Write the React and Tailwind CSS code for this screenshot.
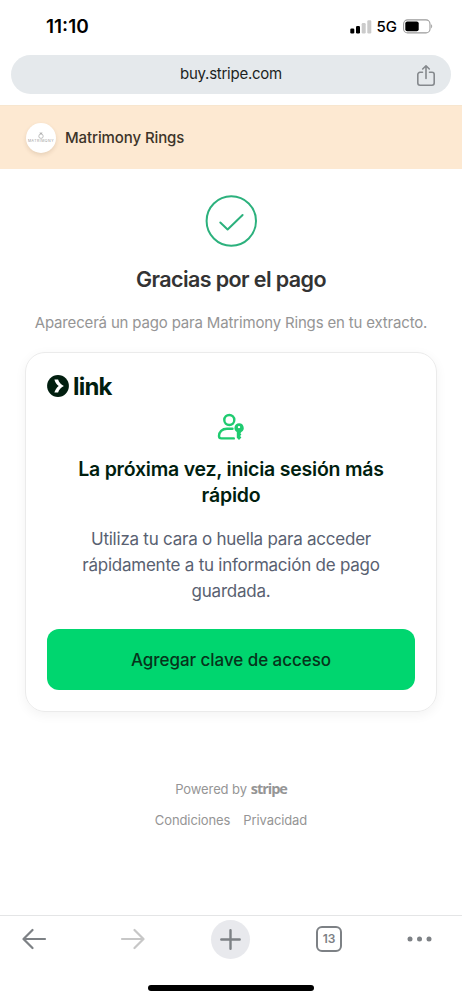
import React from 'react';

const StatusBar = () => (
  <div className="flex h-[55px] items-center justify-between pl-[46px] pr-[29px]">
    <span className="text-[19px] font-semibold text-black">11:10</span>
    <div className="mt-[-2px] flex items-center">
      <svg width="22" height="14" viewBox="0 0 22 14">
        <rect x="0.3" y="8.5" width="4" height="5" rx="1.2" fill="#000" />
        <rect x="6" y="6" width="4" height="7.5" rx="1.2" fill="#000" />
        <rect x="11.7" y="3" width="4" height="10.5" rx="1.2" fill="#cbcbcb" />
        <rect x="17.3" y="0.3" width="4" height="13.2" rx="1.2" fill="#cbcbcb" />
      </svg>
      <span className="ml-[5px] mt-px text-[15px] font-medium text-black">5G</span>
      <svg className="ml-[6px]" width="30" height="15" viewBox="0 0 30 15">
        <rect x="0.6" y="0.9" width="26.4" height="13" rx="4" fill="none" stroke="#9b9b9b" strokeWidth="1.1" />
        <rect x="2.3" y="2.6" width="13.4" height="9.6" rx="2" fill="#000" />
        <path d="M28.2 5.3c1.3.7 1.3 3.5 0 4.2z" fill="#9b9b9b" />
      </svg>
    </div>
  </div>
);

const AddressBar = () => (
  <div className="h-[50px] px-[11px]">
    <div className="grid h-[39px] grid-cols-[1fr_auto_1fr] items-center rounded-full bg-[#e5e9ec] px-[15px]">
      <span />
      <span className="text-[15px] tracking-[-0.25px] text-[#1c1f22]">buy.stripe.com</span>
      <svg className="mt-[2px] justify-self-end" width="20" height="24" viewBox="0 0 20 24" fill="none" stroke="#85898d" strokeWidth="1.6" strokeLinecap="round" strokeLinejoin="round">
        <path d="M6.5 8.3H4a2.2 2.2 0 0 0-2.2 2.2v8.6A2.2 2.2 0 0 0 4 21.3h12a2.2 2.2 0 0 0 2.2-2.2v-8.6A2.2 2.2 0 0 0 16 8.3h-2.5" />
        <path d="M10 14.5V2M6.7 5 10 1.8 13.3 5" />
      </svg>
    </div>
  </div>
);

const MerchantHeader = () => (
  <header className="flex h-[64px] items-center border-t border-[#f7e6cf] bg-[#fde9d2] pl-[26px]">
    <div className="flex h-[30px] w-[30px] flex-col items-center justify-center rounded-full bg-white shadow-[0_2px_4px_rgba(90,60,20,0.14)]">
      <svg width="6" height="7" viewBox="0 0 6 7" fill="none" stroke="#999" strokeWidth="0.6">
        <circle cx="3" cy="4.2" r="2.2" />
        <path d="M1.8 1h2.4L3 2z" />
      </svg>
      <span className="text-[3.5px] leading-[4px] tracking-[0.5px] text-[#999]">MATRIMONY</span>
    </div>
    <span className="ml-[9px] mt-px text-[15px] font-medium tracking-[-0.1px] text-[#3c3429]">Matrimony Rings</span>
  </header>
);

const LinkLogo = () => (
  <div className="flex h-[22px] items-center text-[#011e0f]">
    <svg width="22" height="22" viewBox="0 0 22 22">
      <circle cx="11" cy="11" r="10.9" fill="currentColor" />
      <path d="M7.4 4.4h3.7c.8 2.8 2.9 5.1 5.8 6.6-2.9 1.5-5 3.8-5.8 6.6H7.4c.7-2.7 2.2-4.9 4.3-6.6-2.1-1.7-3.6-3.9-4.3-6.6z" fill="#fff" />
    </svg>
    <span className="ml-[4px] mt-px text-[24px] font-bold leading-[22px] tracking-[-0.8px]">link</span>
  </div>
);

const PasskeyIcon = () => (
  <svg className="mx-auto" width="28" height="28" viewBox="0 0 28 28" fill="none">
    <circle cx="12.3" cy="7" r="5" stroke="#1fcb70" strokeWidth="2.4" />
    <path d="M15.5 15.8H10c-5 0-8 3.2-8 7.2 0 1.5.8 2.4 2.4 2.4h12.4" stroke="#1fcb70" strokeWidth="2.4" strokeLinecap="round" />
    <path fillRule="evenodd" d="M22 10.3a4.6 4.6 0 0 0-2.2 8.6v5.8l2.2 2.2 2.4-2.5-1.3-1.5 1.3-1.5-1-1.2 1-1.3a4.6 4.6 0 0 0-2.4-8.6zm0 2.6a1.2 1.2 0 1 1 0 2.4 1.2 1.2 0 0 1 0-2.4z" fill="#1fcb70" />
  </svg>
);

const PasskeyCard = () => (
  <section className="mx-[25px] mt-[19px] h-[360px] rounded-[20px] border border-[#ebebeb] px-[21px] pt-[22px] shadow-[0_3px_12px_rgba(0,0,0,0.05)]">
    <LinkLogo />
    <div className="mt-[16px]">
      <PasskeyIcon />
    </div>
    <h2 className="mt-[15px] text-center text-[19.5px] font-semibold leading-[26px] tracking-[-0.22px] text-[#011e0f]">
      La próxima vez, inicia sesión más
      <br />
      rápido
    </h2>
    <p className="mt-[18px] text-center text-[17px] leading-[26px] tracking-[-0.24px] text-[#596171]">
      Utiliza tu cara o huella para acceder
      <br />
      rápidamente a tu información de pago
      <br />
      guardada.
    </p>
    <button className="mt-[25px] h-[61px] w-full rounded-[12px] bg-[#00d66f] pt-[2px] text-[17px] font-medium tracking-[-0.05px] text-[#06341b]">
      Agregar clave de acceso
    </button>
  </section>
);

const Footer = () => (
  <footer className="mt-[67px] flex flex-col items-center text-[13px] leading-[20px] text-[#959595]">
    <div className="flex items-center">
      <span className="tracking-[-0.1px]">Powered by</span>
      <span className="ml-[4px] font-['Open_Sans',sans-serif] text-[14.5px] font-bold tracking-[-1.05px]">stripe</span>
    </div>
    <div className="mt-[11px] flex gap-[13px] tracking-[-0.1px]">
      <a>Condiciones</a>
      <a>Privacidad</a>
    </div>
  </footer>
);

const Toolbar = () => (
  <nav className="h-[85px] border-t border-[#e4e5e6]">
    <div className="flex h-[46px] items-center pl-[22px] text-[#7d8185]">
      <svg width="25" height="22" viewBox="0 0 25 22" fill="none" stroke="currentColor" strokeWidth="2.2" strokeLinecap="round" strokeLinejoin="round">
        <path d="M23 11H1.8M10.5 2l-9 9 9 9" />
      </svg>
      <svg className="ml-[73px] text-[#c7c7c7]" width="25" height="22" viewBox="0 0 25 22" fill="none" stroke="currentColor" strokeWidth="2.2" strokeLinecap="round" strokeLinejoin="round">
        <path d="M2 11h21.2M14.5 2l9 9-9 9" />
      </svg>
      <div className="ml-[66px] flex h-[39px] w-[39px] items-center justify-center rounded-full bg-[#e8e9ed]">
        <svg width="21" height="21" viewBox="0 0 21 21" stroke="currentColor" strokeWidth="2.4" strokeLinecap="round">
          <path d="M10.5 1.3v18.4M1.3 10.5h18.4" />
        </svg>
      </div>
      <div className="ml-[66px] flex h-[26px] w-[26px] items-center justify-center rounded-[6px] border-2 border-[#7d8185] text-[12px] font-semibold">
        13
      </div>
      <svg className="ml-[65px]" width="25" height="6" viewBox="0 0 25 6" fill="currentColor">
        <circle cx="3" cy="3" r="2.5" />
        <circle cx="12.5" cy="3" r="2.5" />
        <circle cx="22" cy="3" r="2.5" />
      </svg>
    </div>
    <div className="mx-auto mt-[23px] h-[6px] w-[166px] rounded-full bg-black" />
  </nav>
);

const App = () => {
  return (
    <div className="flex h-[1000px] w-[462px] flex-col bg-white font-['Inter',sans-serif]">
      <StatusBar />
      <AddressBar />
      <MerchantHeader />
      <main className="flex-1">
        <svg className="mx-auto mt-[26px]" width="52" height="52" viewBox="0 0 52 52" fill="none" stroke="#2cb17d" strokeWidth="2" strokeLinecap="round" strokeLinejoin="round">
          <circle cx="26.3" cy="26" r="24.7" />
          <path d="m15.3 27.5 7.3 7L37.6 20" />
        </svg>
        <h1 className="mt-[16px] text-center text-[21.5px] font-semibold leading-[32px] tracking-[-0.6px] text-[#333]">
          Gracias por el pago
        </h1>
        <p className="mt-[18px] text-center text-[15px] leading-[20px] tracking-[-0.17px] text-[#959595]">
          Aparecerá un pago para Matrimony Rings en tu extracto.
        </p>
        <PasskeyCard />
        <Footer />
      </main>
      <Toolbar />
    </div>
  );
};

export default App;
